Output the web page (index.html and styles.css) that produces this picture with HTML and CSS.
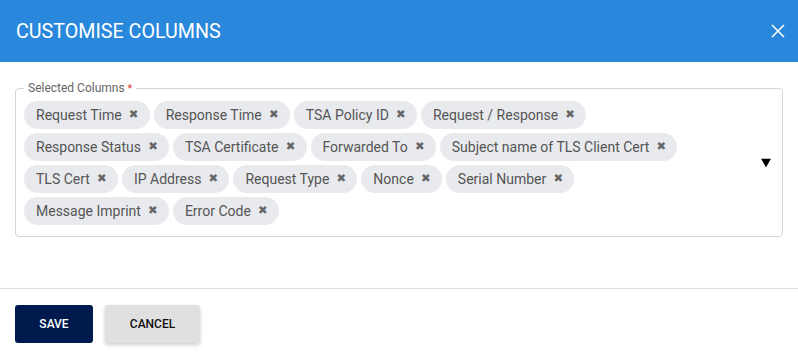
FILE: index.html
```html
<!DOCTYPE html>
<html>
<head>
<meta charset="utf-8">
<link rel="stylesheet" href="styles.css">
</head>
<body>
<div class="dialog">
  <div class="header">
    <h1 class="title">CUSTOMISE COLUMNS</h1>
    <button class="close" aria-label="Close">
      <svg width="14" height="14" viewBox="0 0 14 14"><path d="M1 1L13 13M13 1L1 13" stroke="#fff" stroke-width="1.5" fill="none"/></svg>
    </button>
  </div>
  <div class="body">
    <div class="select">
      <span class="label">Selected Columns <span class="req">*</span></span>
      <div class="chips">
        <span class="chip">Request Time<span class="x">✖</span></span>
        <span class="chip">Response Time<span class="x">✖</span></span>
        <span class="chip">TSA Policy ID<span class="x">✖</span></span>
        <span class="chip">Request / Response<span class="x">✖</span></span>
        <span class="chip">Response Status<span class="x">✖</span></span>
        <span class="chip">TSA Certificate<span class="x">✖</span></span>
        <span class="chip">Forwarded To<span class="x">✖</span></span>
        <span class="chip">Subject name of TLS Client Cert<span class="x">✖</span></span>
        <span class="chip">TLS Cert<span class="x">✖</span></span>
        <span class="chip">IP Address<span class="x">✖</span></span>
        <span class="chip">Request Type<span class="x">✖</span></span>
        <span class="chip">Nonce<span class="x">✖</span></span>
        <span class="chip">Serial Number<span class="x">✖</span></span>
        <span class="chip">Message Imprint<span class="x">✖</span></span>
        <span class="chip">Error Code<span class="x">✖</span></span>
      </div>
      <svg class="arrow" width="10" height="9" viewBox="0 0 10 9"><path d="M0 0H10L5 9Z" fill="#000"/></svg>
    </div>
  </div>
  <div class="footer">
    <button class="btn save">SAVE</button>
    <button class="btn cancel">CANCEL</button>
  </div>
</div>
</body>
</html>
```

FILE: styles.css
```css
* { box-sizing: border-box; }
html, body { margin: 0; padding: 0; background: #fff; }
body { font-family: Roboto, "Liberation Sans", sans-serif; width: 798px; height: 359px; overflow: hidden; }

.header {
  height: 62px;
  background: #2a88dc;
  display: flex;
  align-items: center;
  justify-content: space-between;
  padding: 0 13px 0 16px;
}
.title {
  margin: 0;
  color: #fff;
  font-size: 19.7px;
  font-weight: 400;
  letter-spacing: 0;
}
.close {
  background: none;
  border: 0;
  padding: 0;
  width: 14px;
  height: 14px;
  display: flex;
  cursor: pointer;
}

.body { padding: 26px 15px 51px 15px; }

.select {
  position: relative;
  border: 1px solid #d6d6d6;
  border-radius: 4px;
  padding: 12px 72px 11px 8px;
}
.label {
  position: absolute;
  top: -8px;
  left: 8px;
  background: #fff;
  padding: 0 4px;
  font-size: 12px;
  line-height: 14px;
  color: #666;
}
.req { color: #e53935; font-size: 11px; }

.chips {
  display: flex;
  flex-wrap: wrap;
  gap: 4px;
}
.chip {
  display: inline-flex;
  align-items: center;
  height: 28px;
  padding: 0 12px;
  border-radius: 14px;
  background: #e8eaed;
  color: #555;
  font-size: 14px;
  white-space: nowrap;
}
.x {
  margin-left: 8px;
  width: 8px;
  display: inline-flex;
  justify-content: center;
  font-family: "DejaVu Sans", sans-serif;
  font-size: 11.5px;
  line-height: 1;
  color: #666;
  overflow: visible;
}
.arrow {
  position: absolute;
  right: 11px;
  top: 50%;
  transform: translateY(-50%);
}

.footer {
  border-top: 1px solid #e0e0e0;
  padding: 16px 15px;
  display: flex;
  gap: 12px;
}
.btn {
  height: 38px;
  padding: 0 24px;
  border: 0;
  border-radius: 3px;
  font-family: Roboto, "Liberation Sans", sans-serif;
  font-size: 12px;
  font-weight: 500;
}
.save { background: #001a4e; color: #fff; width: 78px; }
.cancel { background: #e0e0e0; color: #111; width: 95px; box-shadow: 0 2px 4px rgba(0,0,0,0.2); }
```
